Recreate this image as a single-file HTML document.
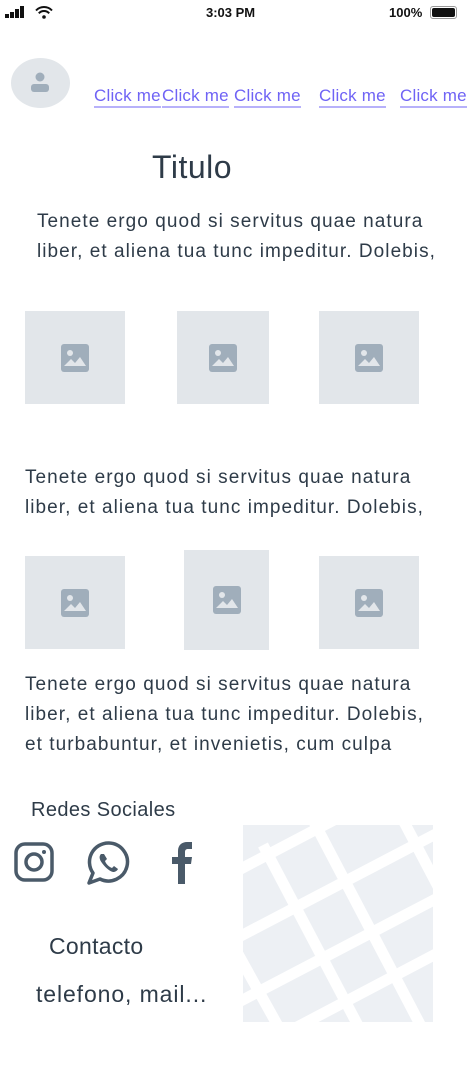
<!DOCTYPE html>
<html><head><meta charset="utf-8"><style>
*{margin:0;padding:0;box-sizing:border-box}
body{width:470px;height:1085px;background:#fff;position:relative;overflow:hidden;font-family:"Liberation Sans",sans-serif;color:#2e3b48}
.a{position:absolute;white-space:nowrap}
.p{font-size:19px;line-height:30px;letter-spacing:1.05px}
.ph{position:absolute;background:#e2e6ea;display:flex;align-items:center;justify-content:center}
.lk{position:absolute;top:86px;font-size:17px;color:#6f63f5;border-bottom:2px solid #b7b1fa;line-height:20px;letter-spacing:0.2px}
</style></head><body>
<svg class="a" style="left:5px;top:6px" width="22" height="12" viewBox="0 0 22 12"><rect x="0" y="8" width="4" height="4" fill="#111"/><rect x="5" y="6" width="4" height="6" fill="#111"/><rect x="10" y="3" width="4" height="9" fill="#111"/><rect x="15" y="0" width="4" height="12" fill="#111"/></svg>
<svg class="a" style="left:35px;top:6px" width="18" height="13" viewBox="0 0 18 13"><path d="M1 4.5a11 11 0 0 1 16 0M3.8 7.3a7 7 0 0 1 10.4 0" stroke="#111" stroke-width="2" fill="none"/><circle cx="9" cy="11" r="1.8" fill="#111"/></svg>
<div class="a" style="left:206px;top:5px;font-size:13px;font-weight:bold;color:#111">3:03 PM</div>
<div class="a" style="left:389px;top:5px;font-size:13px;font-weight:bold;color:#111">100%</div>
<div class="a" style="left:430px;top:6px;width:27px;height:13px;border:1px solid #999;border-radius:3px;padding:1px"><div style="width:100%;height:100%;background:#111;border-radius:2px"></div></div>
<div class="a" style="left:11px;top:58px;width:59px;height:50px;border-radius:50%;background:#e2e6ea"></div>
<svg class="a" style="left:29px;top:70px" width="22" height="24" viewBox="0 0 22 24"><circle cx="11" cy="7" r="4.5" fill="#a0aebb"/><rect x="2" y="14" width="18" height="8" rx="3" fill="#a0aebb"/></svg>
<div class="lk" style="left:94px">Click me</div>
<div class="lk" style="left:162px">Click me</div>
<div class="lk" style="left:234px">Click me</div>
<div class="lk" style="left:319px">Click me</div>
<div class="lk" style="left:400px">Click me</div>
<div class="a" style="left:152px;top:147px;font-size:32px;line-height:40px;letter-spacing:0.5px">Titulo</div>
<div class="a p" style="left:37px;top:207px">Tenete ergo quod si servitus quae natura<br>liber, et aliena tua tunc impeditur. Dolebis,</div>
<div class="ph" style="left:25px;top:311px;width:100px;height:93px"><svg width="28" height="28"><rect width="28" height="28" rx="3" fill="#a0aebb"/><circle cx="9" cy="9" r="3" fill="#e2e6ea"/><path d="M3 22l7-7 4 4 5-6 6 9z" fill="#e2e6ea"/></svg></div>
<div class="ph" style="left:177px;top:311px;width:92px;height:93px"><svg width="28" height="28"><rect width="28" height="28" rx="3" fill="#a0aebb"/><circle cx="9" cy="9" r="3" fill="#e2e6ea"/><path d="M3 22l7-7 4 4 5-6 6 9z" fill="#e2e6ea"/></svg></div>
<div class="ph" style="left:319px;top:311px;width:100px;height:93px"><svg width="28" height="28"><rect width="28" height="28" rx="3" fill="#a0aebb"/><circle cx="9" cy="9" r="3" fill="#e2e6ea"/><path d="M3 22l7-7 4 4 5-6 6 9z" fill="#e2e6ea"/></svg></div>
<div class="a p" style="left:25px;top:463px">Tenete ergo quod si servitus quae natura<br>liber, et aliena tua tunc impeditur. Dolebis,</div>
<div class="ph" style="left:25px;top:556px;width:100px;height:93px"><svg width="28" height="28"><rect width="28" height="28" rx="3" fill="#a0aebb"/><circle cx="9" cy="9" r="3" fill="#e2e6ea"/><path d="M3 22l7-7 4 4 5-6 6 9z" fill="#e2e6ea"/></svg></div>
<div class="ph" style="left:184px;top:550px;width:85px;height:100px"><svg width="28" height="28"><rect width="28" height="28" rx="3" fill="#a0aebb"/><circle cx="9" cy="9" r="3" fill="#e2e6ea"/><path d="M3 22l7-7 4 4 5-6 6 9z" fill="#e2e6ea"/></svg></div>
<div class="ph" style="left:319px;top:556px;width:100px;height:93px"><svg width="28" height="28"><rect width="28" height="28" rx="3" fill="#a0aebb"/><circle cx="9" cy="9" r="3" fill="#e2e6ea"/><path d="M3 22l7-7 4 4 5-6 6 9z" fill="#e2e6ea"/></svg></div>
<div class="a p" style="left:25px;top:670px">Tenete ergo quod si servitus quae natura<br>liber, et aliena tua tunc impeditur. Dolebis,<br>et turbabuntur, et invenietis, cum culpa</div>
<div class="a" style="left:31px;top:799px;font-size:20px;letter-spacing:0.4px">Redes Sociales</div>
<svg class="a" style="left:14px;top:842px" width="40" height="40" viewBox="0 0 40 40"><rect x="2" y="2" width="36" height="36" rx="9" fill="none" stroke="#4a5a69" stroke-width="3.5"/><circle cx="20" cy="20" r="8" fill="none" stroke="#4a5a69" stroke-width="3.5"/><circle cx="30" cy="10" r="2" fill="#4a5a69"/></svg>
<svg class="a" style="left:86px;top:840px" width="46" height="46" viewBox="0 0 46 46"><path d="M23 3a19 19 0 1 1-9 36L3 43l4-10A19 19 0 0 1 23 3z" fill="none" stroke="#4a5a69" stroke-width="3.5" stroke-linejoin="round"/><path d="M15 14c-2 2-2 5 1 9s7 8 11 9c2 0 4-1 5-3l-4-3-2 2c-3-1-6-4-7-7l2-2-3-5z" fill="#4a5a69"/></svg>
<svg class="a" style="left:170px;top:842px" width="24" height="42" viewBox="0 0 24 42"><path d="M8 42V22H2v-7h6V9c0-6 4-9 9-9h5v7h-4c-2 0-3 1-3 3v5h7l-1 7h-6v20z" fill="#4a5a69"/></svg>
<div class="a" style="left:49px;top:933px;font-size:23px;letter-spacing:0.3px">Contacto</div>
<div class="a" style="left:36px;top:981px;font-size:23px;letter-spacing:0.9px">telefono, mail...</div>
<svg class="a" style="left:243px;top:825px" width="190" height="197" viewBox="0 0 190 197"><rect width="190" height="197" fill="#edf0f4"/><g stroke="#fff" stroke-width="11"><line x1="-10" y1="48" x2="110" y2="-15"/><line x1="-10" y1="115" x2="210" y2="0"/><line x1="-10" y1="180" x2="210" y2="65"/><line x1="20" y1="220" x2="210" y2="120"/><line x1="20" y1="20" x2="120" y2="210"/><line x1="70" y1="-5" x2="180" y2="205"/><line x1="160" y1="-5" x2="210" y2="90"/><line x1="-10" y1="120" x2="40" y2="210"/></g></svg>
</body></html>
